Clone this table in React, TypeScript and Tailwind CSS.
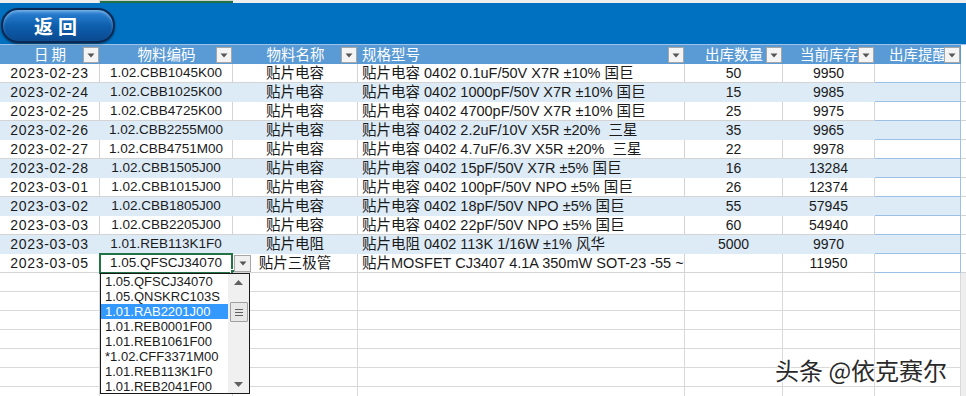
import React from "react";

const colW = ["w-[100px]", "w-[133px]", "w-[125px]", "w-[327px]", "w-[98px]", "w-[92px]", "w-[86px]"];

const headers = ["日 期", "物料编码", "物料名称", "规格型号", "出库数量", "当前库存", "出库提醒"];

const rows: string[][] = [
  ["2023-02-23", "1.02.CBB1045K00", "贴片电容", "贴片电容 0402 0.1uF/50V X7R ±10% 国巨", "50", "9950"],
  ["2023-02-24", "1.02.CBB1025K00", "贴片电容", "贴片电容 0402 1000pF/50V X7R ±10% 国巨", "15", "9985"],
  ["2023-02-25", "1.02.CBB4725K00", "贴片电容", "贴片电容 0402 4700pF/50V X7R ±10% 国巨", "25", "9975"],
  ["2023-02-26", "1.02.CBB2255M00", "贴片电容", "贴片电容 0402 2.2uF/10V X5R ±20%  三星", "35", "9965"],
  ["2023-02-27", "1.02.CBB4751M00", "贴片电容", "贴片电容 0402 4.7uF/6.3V X5R ±20%  三星", "22", "9978"],
  ["2023-02-28", "1.02.CBB1505J00", "贴片电容", "贴片电容 0402 15pF/50V X7R ±5% 国巨", "16", "13284"],
  ["2023-03-01", "1.02.CBB1015J00", "贴片电容", "贴片电容 0402 100pF/50V NPO ±5% 国巨", "26", "12374"],
  ["2023-03-02", "1.02.CBB1805J00", "贴片电容", "贴片电容 0402 18pF/50V NPO ±5% 国巨", "55", "57945"],
  ["2023-03-03", "1.02.CBB2205J00", "贴片电容", "贴片电容 0402 22pF/50V NPO ±5% 国巨", "60", "54940"],
  ["2023-03-03", "1.01.REB113K1F0", "贴片电阻", "贴片电阻 0402 113K 1/16W ±1% 风华", "5000", "9970"],
  ["2023-03-05", "1.05.QFSCJ34070", "贴片三极管", "贴片MOSFET CJ3407 4.1A 350mW SOT-23 -55 ~", "", "11950"],
];

const listItems = [
  "1.05.QFSCJ34070",
  "1.05.QNSKRC103S",
  "1.01.RAB2201J00",
  "1.01.REB0001F00",
  "1.01.REB1061F00",
  "*1.02.CFF3371M00",
  "1.01.REB113K1F0",
  "1.01.REB2041F00",
];

function FilterBtn() {
  return (
    <div className="absolute right-[1px] top-[2px] flex h-[16px] w-[16px] items-center justify-center border border-[#a6a6a6] bg-[#f4f4f4]">
      <svg width="8" height="5" viewBox="0 0 8 5">
        <path d="M0.5 0.5 L7.5 0.5 L4 4.5 Z" fill="#555" />
      </svg>
    </div>
  );
}

export default function App() {
  return (
    <div className="relative h-[396px] w-[966px] overflow-hidden bg-white font-['Liberation_Sans','Noto_Sans_CJK_SC',sans-serif] text-[14px] text-[#1a1a1a]">
      {/* top strip */}
      <div className="flex h-[3px] bg-[#eeeeee]">
        <div className="w-[100px] border-r border-[#cfcfcf]" />
        <div className="w-[133px] border-b-2 border-[#217346] bg-[#d2d2d2]" />
        <div className="flex-1" />
      </div>

      {/* blue band */}
      <div className="flex h-[41px] items-start bg-[#0070c0] pl-[1px] pt-[5px]">
        <div className="flex h-[35px] w-[114px] items-center justify-center rounded-[17px] border-2 border-[#0a2a55] bg-gradient-to-b from-[#2f86d8] via-[#0e5fae] to-[#0a4a90] shadow-[inset_0_2px_3px_rgba(255,255,255,0.35),0_1px_2px_rgba(0,0,0,0.5)]">
          <span className="font-['Noto_Sans_CJK_SC',sans-serif] text-[19px] font-bold leading-none tracking-[5px] text-white">返回</span>
        </div>
      </div>

      {/* header */}
      <div className="flex h-[20px] border-t border-[#9fc3e8] bg-[#5b9bd5] text-[14.5px] text-white">
        {headers.map((h, i) => (
          <div
            key={i}
            className={`${colW[i]} relative flex h-full shrink-0 items-center ${i === 3 ? "justify-start pl-[4px]" : "justify-center"} leading-none`}
          >
            <span className="font-['Noto_Sans_CJK_SC',sans-serif]">{h}</span>
            <FilterBtn />
          </div>
        ))}
        <div className="flex-1 bg-white" />
      </div>

      {/* data rows */}
      {rows.map((r, ri) => {
        const banded = ri % 2 === 1;
        const last = ri === rows.length - 1;
        return (
          <div
            key={ri}
            className={`flex h-[19px] ${banded ? "bg-[#ddebf7]" : "bg-white"}`}
          >
            {colW.map((w, ci) => {
              const txt = r[ci] ?? "";
              const isLastCol = ci === colW.length - 1;
              const vline = isLastCol
                ? "border-r border-[#9bc2e6]"
                : banded
                ? "border-r border-[#ddebf7]"
                : "border-r border-[#d4d4d4]";
              const align = ci === 3 ? "justify-start pl-[4px] overflow-hidden" : "justify-center";
              const extra =
                ci === 0
                  ? "tracking-[0.7px]"
                  : ci === 1
                  ? "text-[13.5px]"
                  : ci === 2 || ci === 3
                  ? "text-[14.5px]"
                  : "";
              return (
                <div
                  key={ci}
                  className={`${w} relative flex h-full shrink-0 items-center ${align} border-b border-[#9bc2e6] ${vline} leading-none ${extra}`}
                >
                  <span className="whitespace-pre">{txt}</span>
                  {last && ci === 1 && (
                    <>
                      <div className="absolute -left-[1px] -top-[1px] h-[21px] w-[134px] border-2 border-[#217346]" />
                      <div className="absolute -bottom-[2px] -right-[3px] h-[5px] w-[5px] border border-white bg-[#217346]" />
                      <div className="absolute left-[134px] top-[1px] z-10 flex h-[17px] w-[17px] items-center justify-center border border-[#a6a6a6] bg-[#f0f0f0]">
                        <svg width="8" height="5" viewBox="0 0 8 5">
                          <path d="M0.5 0.5 L7.5 0.5 L4 4.5 Z" fill="#555" />
                        </svg>
                      </div>
                    </>
                  )}
                </div>
              );
            })}
            <div className="flex-1 border-b border-[#d4d4d4] bg-white" />
          </div>
        );
      })}

      {/* empty grid rows */}
      {Array.from({ length: 7 }).map((_, ri) => (
        <div key={ri} className="flex h-[19px]">
          {colW.map((w, ci) => (
            <div key={ci} className={`${w} h-full shrink-0 border-b border-r border-[#d9d9d9]`} />
          ))}
          <div className="flex-1 bg-[#eeeeee]" />
        </div>
      ))}

      {/* dropdown list */}
      <div className="absolute left-[100px] top-[273px] flex h-[121px] w-[150px] border border-[#1a1a1a] bg-white">
        <div className="flex w-[127px] flex-col">
          {listItems.map((it, i) => (
            <div
              key={i}
              className={`flex h-[15px] shrink-0 items-center pl-[4px] text-[13px] leading-none ${
                i === 2 ? "bg-[#3399ff] text-white" : "text-[#1a1a1a]"
              }`}
            >
              {it}
            </div>
          ))}
        </div>
        <div className="flex flex-1 flex-col items-center bg-[#f0f0f0]">
          <div className="flex h-[17px] w-full items-center justify-center">
            <svg width="9" height="5" viewBox="0 0 9 5">
              <path d="M4.5 0 L9 5 L0 5 Z" fill="#606060" />
            </svg>
          </div>
          <div className="mt-[11px] flex h-[20px] w-[18px] flex-col items-center justify-center gap-[2px] rounded-[1px] border border-[#a0a0a0] bg-[#e8e8e8]">
            <div className="h-px w-[8px] bg-[#606060]" />
            <div className="h-px w-[8px] bg-[#606060]" />
            <div className="h-px w-[8px] bg-[#606060]" />
          </div>
          <div className="flex-1" />
          <div className="flex h-[17px] w-full items-center justify-center">
            <svg width="9" height="5" viewBox="0 0 9 5">
              <path d="M0 0 L9 0 L4.5 5 Z" fill="#606060" />
            </svg>
          </div>
        </div>
      </div>

      {/* watermark */}
      <div className="absolute left-[775px] top-[358px] font-['Noto_Sans_CJK_SC',sans-serif] text-[24px] leading-none text-[#2a2a2a] [text-shadow:0_0_2px_#fff,1px_1px_1px_#fff,-1px_-1px_1px_#fff]">
        头条 @依克赛尔
      </div>
    </div>
  );
}
